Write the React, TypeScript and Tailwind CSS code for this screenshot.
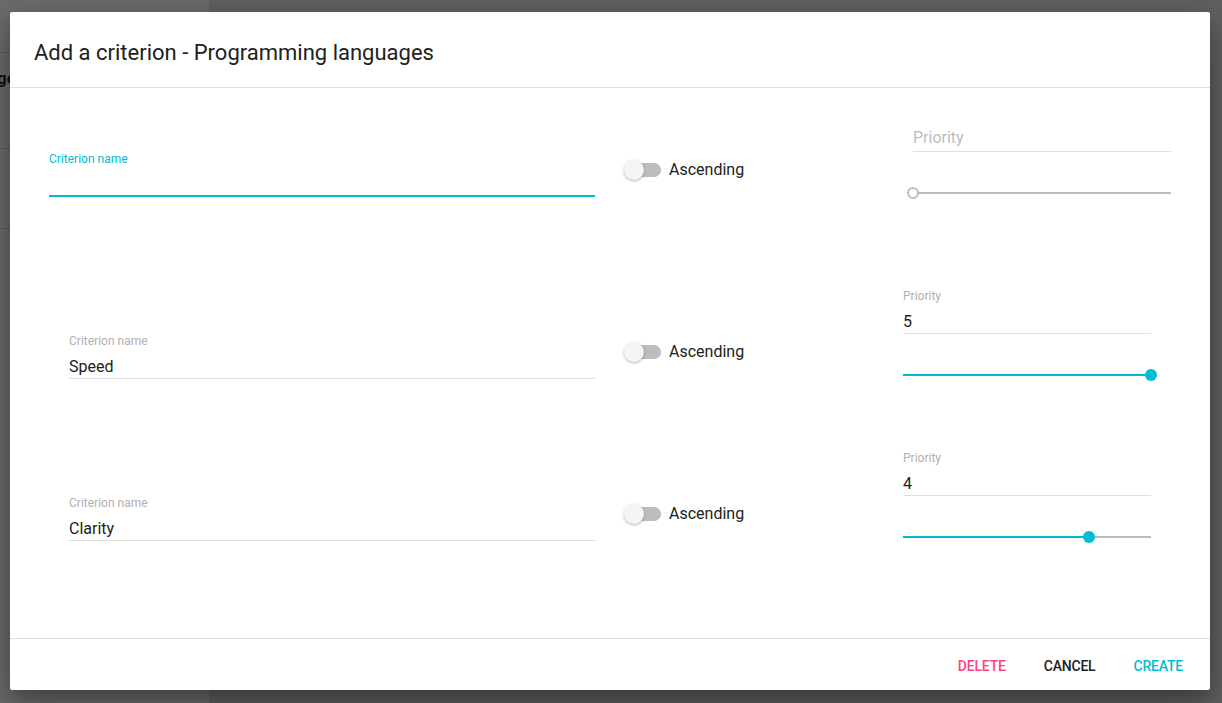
import React from 'react';

const CYAN = '#00bcd4';

function TextField({ label, value, focused, placeholder }: {
  label?: string; value?: string; focused?: boolean; placeholder?: string;
}) {
  return (
    <div>
      <div className={`h-[14px] text-[12px] leading-[16px] ${focused ? 'text-[#00bcd4]' : 'text-[#b0b0b0]'}`}>
        {label ?? ''}
      </div>
      <div
        className={`h-[32px] text-[16px] leading-[20px] ${value ? 'pt-[10px]' : 'pt-[8px]'} ${
          focused ? 'border-b-2 border-[#00bcd4]' : 'border-b border-[#e0e0e0]'
        }`}
      >
        {value ? (
          <span className="text-[#212121]">{value}</span>
        ) : (
          <span className="text-[#bdbdbd]">{placeholder ?? ''}</span>
        )}
      </div>
    </div>
  );
}

function Toggle({ label }: { label: string }) {
  return (
    <div className="flex items-center h-[24px]">
      <div className="relative w-[37px] h-[24px] shrink-0">
        <div className="absolute right-0 top-[5px] w-[34px] h-[14px] rounded-full bg-[#bdbdbd]" />
        <div className="absolute left-0 top-[2px] w-[20px] h-[20px] rounded-full bg-[#f5f5f5] shadow-[0_1px_3px_rgba(0,0,0,0.3)]" />
      </div>
      <span className="ml-[8px] text-[16px] text-[#212121]">{label}</span>
    </div>
  );
}

function Slider({ fraction, width }: { fraction: number; width: number }) {
  const x = fraction * width;
  const empty = fraction === 0;
  return (
    <div className="relative h-[12px]" style={{ width }}>
      <div className="absolute left-0 right-0 top-[5px] h-[2px] bg-[#bdbdbd]" />
      <div className="absolute left-0 top-[5px] h-[2px] bg-[#00bcd4]" style={{ width: x }} />
      {empty ? (
        <div
          className="absolute top-0 w-[12px] h-[12px] rounded-full border-2 border-[#bdbdbd] bg-white"
          style={{ left: x - 6 }}
        />
      ) : (
        <div
          className="absolute top-0 w-[12px] h-[12px] rounded-full bg-[#00bcd4]"
          style={{ left: x - 6 }}
        />
      )}
    </div>
  );
}

function CriterionRow({ name, priority }: { name: string; priority: number }) {
  return (
    <div className="flex items-start h-[162px]">
      <div className="ml-[59px] w-[526px] mt-[63px]">
        <TextField label="Criterion name" value={name} />
      </div>
      <div className="ml-[29px] w-[279px] mt-[70px]">
        <Toggle label="Ascending" />
      </div>
      <div className="w-[248px] mt-[18px]">
        <TextField label="Priority" value={String(priority)} />
        <div className="mt-[35px]">
          <Slider fraction={(priority - 1) / 4} width={248} />
        </div>
      </div>
    </div>
  );
}

export default function App() {
  return (
    <div
      className="relative w-[1222px] h-[703px] overflow-hidden bg-[#606060]"
      style={{ fontFamily: 'Roboto, "Liberation Sans", sans-serif' }}
    >
      {/* page behind the overlay */}
      <div className="flex h-full">
        <div className="w-[209px] h-full bg-[#6b6b6b] overflow-hidden">
          <div className="h-[53px] border-b border-[#5c5c5c]" />
          <div className="h-[96px] border-b border-[#5c5c5c] pt-[13px]">
            <span className="block -ml-[3px] text-[17px] font-bold text-[#111]">ge</span>
          </div>
          <div className="h-[80px] border-b border-[#5c5c5c]" />
        </div>
        <div className="flex-1 h-full bg-[#606060]" />
      </div>

      {/* dialog */}
      <div className="absolute left-[10px] top-[12px] w-[1200px] h-[678px] bg-white rounded-[2px] flex flex-col shadow-[0_14px_45px_rgba(0,0,0,0.25),0_10px_18px_rgba(0,0,0,0.22)]">
        <div className="h-[76px] shrink-0 border-b border-[#e0e0e0] pl-[24px] pt-[27px]">
          <h1 className="text-[22px] leading-[28px] font-normal text-[#212121]">
            Add a criterion - Programming languages
          </h1>
        </div>

        <div className="flex-1">
          <div className="flex items-start h-[182px]">
            <div className="ml-[39px] w-[546px] mt-[63px]">
              <TextField label="Criterion name" focused />
            </div>
            <div className="ml-[29px] w-[289px] mt-[70px]">
              <Toggle label="Ascending" />
            </div>
            <div className="w-[258px] mt-[18px]">
              <TextField placeholder="Priority" />
              <div className="mt-[35px]">
                <Slider fraction={0} width={258} />
              </div>
            </div>
          </div>
          <CriterionRow name="Speed" priority={5} />
          <CriterionRow name="Clarity" priority={4} />
        </div>

        <div className="h-[52px] shrink-0 border-t border-[#e0e0e0] flex items-center justify-end gap-[22px] pr-[19px] pt-[3px]">
          <button className="px-[8px] h-[36px] text-[14px] font-medium tracking-[-0.2px] text-[#ff4081]">DELETE</button>
          <button className="px-[8px] h-[36px] text-[14px] font-medium tracking-[-0.2px] text-[#212121]">CANCEL</button>
          <button className="px-[8px] h-[36px] text-[14px] font-medium tracking-[-0.2px]" style={{ color: CYAN }}>CREATE</button>
        </div>
      </div>
    </div>
  );
}
